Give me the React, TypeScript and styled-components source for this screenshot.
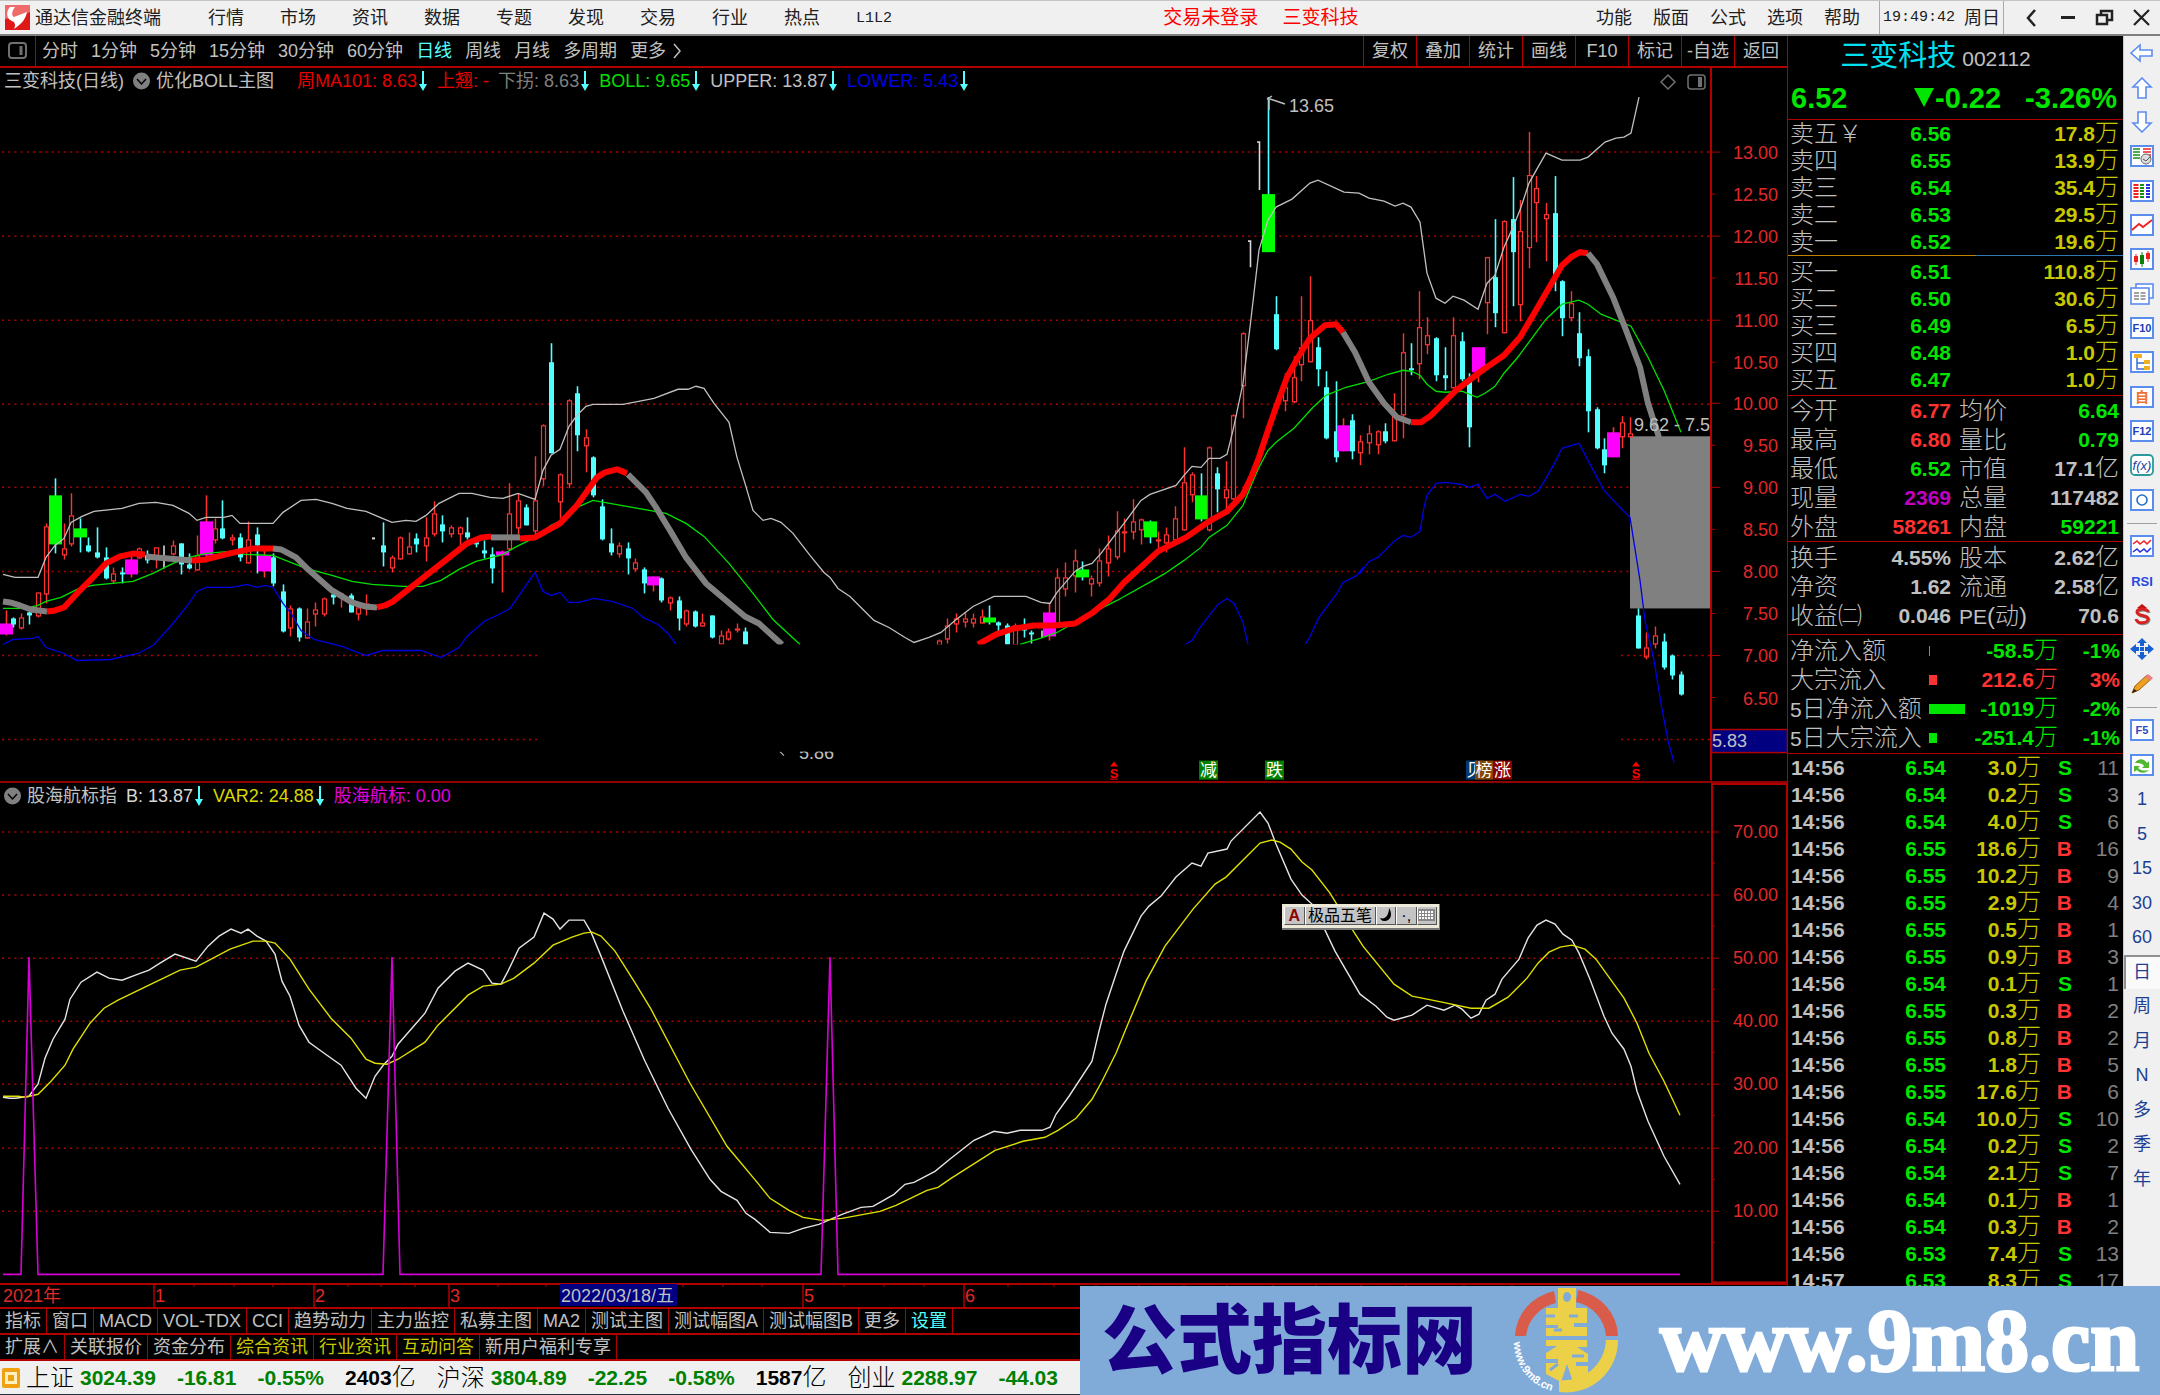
import React from "react";
import styled, { createGlobalStyle } from "styled-components";

const RED = "#b00000";
const SILVER = "#c0c0c0";
const CYAN = "#54ffff";
const GREEN = "#00e600";
const UP = "#ff3232";
const YELLOW = "#c8c800";
const SANS = '"Liberation Sans", "Noto Sans CJK SC", sans-serif';

const Global = createGlobalStyle`
  * { box-sizing: border-box; }
  html, body { margin: 0; background: #000; }
  body { font-family: ${SANS}; font-size: 18px; line-height: 24px; color: ${SILVER}; overflow: hidden; }
  button { font: inherit; color: inherit; background: none; border: 0; padding: 0; margin: 0; white-space: nowrap; cursor: pointer; }
  svg { display: block; }
`;

/* ---------- shell ---------- */
const Shell = styled.div`
  position: relative;
  display: grid;
  grid-template-rows: 36px minmax(0, 1fr) 36px;
  height: 100vh;
  white-space: nowrap;
`;
const Body = styled.div`
  display: grid;
  grid-template-columns: minmax(0, 1fr) 336px 37px;
  min-height: 0;
`;

/* ---------- title bar ---------- */
const TitleBar = styled.header`
  display: flex;
  align-items: center;
  background: #f0f0f0;
  color: #202020;
  border-top: 1px solid #c4c4c4;
  border-bottom: 2px solid #808080;
`;
const TitleLeft = styled.div`
  flex: 1162 1 0;
  display: flex;
  align-items: center;
  gap: 5px;
  padding-left: 5px;
`;
const Menu = styled.nav<{ $gap: number; $left?: number }>`
  display: flex;
  gap: ${(p) => p.$gap}px;
  margin-left: ${(p) => p.$left ?? 0}px;
`;
const Mono = styled.span`
  font-family: "Liberation Mono", "Noto Sans CJK SC", monospace;
  font-size: 15px;
`;
const Notice = styled.div`
  flex: 434 1 0;
  display: flex;
  gap: 24px;
  color: #ff0000;
  font-size: 19px;
`;
const TitleRight = styled.div`
  flex: none;
  width: 564px;
  display: flex;
  align-items: center;
`;
const Clock = styled.div`
  display: flex;
  align-items: center;
  justify-content: center;
  gap: 9px;
  width: 125px;
  height: 33px;
  margin: 0 9px 0 19px;
  border-left: 1px solid #a8a8a8;
  border-right: 1px solid #a8a8a8;
`;
const WinButton = styled.button`
  flex: 1;
  display: grid;
  place-items: center;
`;

/* ---------- chart column ---------- */
const ChartColumn = styled.main`
  display: flex;
  flex-direction: column;
  min-width: 0;
  min-height: 0;
`;
const Toolbar = styled.div`
  flex: none;
  display: flex;
  height: 32px;
  border-bottom: 2px solid ${RED};
`;
const ToggleButton = styled.button`
  width: 36px;
  display: grid;
  place-items: center;
  border-right: 1px solid ${RED};
`;
const Periods = styled.nav`
  flex: 1;
  display: flex;
  align-items: center;
  gap: 13px;
  padding-left: 6px;
`;
const TextButton = styled.button<{ $color?: string }>`
  display: flex;
  align-items: center;
  gap: 6px;
  color: ${(p) => p.$color ?? "inherit"};
`;
const ToolButton = styled.button`
  width: 53px;
  border-left: 1px solid ${RED};
`;
const Panel = styled.section<{ $grow: number }>`
  position: relative;
  flex: ${(p) => p.$grow} 1 0;
  min-height: 0;
  display: grid;
  grid-template: minmax(0, 1fr) / minmax(0, 1fr);
  & > * { grid-area: 1 / 1; }
`;
const PanelRule = styled.div`
  flex: none;
  height: 2px;
  background: #900000;
`;
const Canvas = styled.svg`
  width: 100%;
  height: 100%;
`;
const Legend = styled.div`
  align-self: start;
  display: flex;
  align-items: center;
  gap: 9px;
  height: 26px;
  padding-left: 4px;
`;
const LegendItem = styled.span<{ $color?: string }>`
  display: flex;
  align-items: center;
  gap: 1px;
  color: ${(p) => p.$color ?? SILVER};
`;
const LegendName = styled(LegendItem)<{ $after?: number }>`
  gap: 6px;
  margin-right: ${(p) => p.$after ?? 0}px;
`;
const DateAxis = styled.div`
  flex: none;
  height: 24px;
`;
const Tabs = styled.nav`
  flex: none;
  display: flex;
  height: 26px;
  border-top: 2px solid ${RED};
`;
const Tab = styled.button<{ $color?: string }>`
  padding: 0 5px;
  border-right: 1px solid ${RED};
  color: ${(p) => p.$color ?? SILVER};
`;

/* ---------- input method bar ---------- */
const ImeBar = styled.div`
  position: absolute;
  left: 1282px;
  top: 121px;
  display: flex;
  width: 158px;
  height: 26px;
  padding: 3px 2px;
  background: #ece9d8;
  border-right: 1px solid #777;
  border-bottom: 2px solid #777;
`;
const ImeCell = styled.button<{ $wide?: boolean; $color?: string }>`
  flex: ${(p) => (p.$wide ? "none" : "1")};
  width: ${(p) => (p.$wide ? "71px" : "auto")};
  display: grid;
  place-items: center;
  background: #c4c4c4;
  border-right: 1px solid #555;
  border-bottom: 1px solid #555;
  border-left: 1px solid #fff;
  color: ${(p) => p.$color ?? "#000"};
  font-size: 16px;
  line-height: 18px;
`;

/* ---------- quote column ---------- */
const Quote = styled.aside`
  overflow: hidden;
  border-left: 1px solid ${RED};
`;
const NameRow = styled.div`
  display: flex;
  align-items: baseline;
  justify-content: center;
  gap: 6px;
  height: 40px;
  line-height: 40px;
  font-size: 21px;
  padding-right: 40px;
`;
const StockName = styled.span`
  color: #00e0f0;
  font-size: 29px;
`;
const PriceRow = styled.div`
  display: flex;
  align-items: center;
  height: 43px;
  padding: 0 6px 0 3px;
  color: ${GREEN};
  font-size: 29px;
  font-weight: 700;
`;
const Change = styled.span`
  margin: 0 24px 0 auto;
  display: flex;
  align-items: center;
  gap: 1px;
`;
const Sheet = styled.table<{ $row: number; $top?: number; $bottom?: number }>`
  width: 100%;
  table-layout: fixed;
  border-collapse: separate;
  border-spacing: 0;
  border-top: 1px solid ${RED};
  padding: ${(p) => p.$top ?? 0}px 0 ${(p) => p.$bottom ?? 0}px;
  line-height: ${(p) => p.$row}px;
`;
const Split = styled.div`
  height: 1px;
  background: linear-gradient(to right, #c08000 56%, #2f78b0 56%);
`;
const BuySheet = styled(Sheet)`
  border-top: 0;
`;
const Label = styled.th<{ $indent?: number }>`
  padding: 0 0 0 ${(p) => p.$indent ?? 2}px;
  text-align: left;
  font-size: 24px;
  font-weight: 300;
  b { font-size: 21px; line-height: 1; }
`;
const Cell = styled.td`
  padding: 0;
`;
const Num = styled.td<{ $color?: string; $right?: number; $plain?: boolean }>`
  padding: 0 ${(p) => p.$right ?? 0}px 0 0;
  text-align: right;
  color: ${(p) => p.$color ?? SILVER};
  font-size: 21px;
  font-weight: ${(p) => (p.$plain ? 400 : 700)};
`;
const Time = styled.td`
  padding: 0 0 0 3px;
  font-size: 21px;
  font-weight: 700;
`;
const Unit = styled.span`
  font-size: 24px;
  font-weight: 300;
  line-height: 1;
`;
const Meter = styled.i<{ $color: string }>`
  display: block;
  height: 10px;
  background: ${(p) => p.$color};
`;

/* ---------- tool strip ---------- */
const Strip = styled.nav`
  display: flex;
  flex-direction: column;
  background: #f0f0f0;
  border-left: 1px solid #c8c8c8;
`;
const StripGroup = styled.div<{ $height: number }>`
  display: flex;
  flex-direction: column;
  height: ${(p) => p.$height}px;
`;
const StripButton = styled.button<{ $active?: boolean }>`
  flex: 1;
  display: grid;
  place-items: center;
  color: #1c3f94;
  background: ${(p) => (p.$active ? "#fafafa" : "none")};
  box-shadow: ${(p) => (p.$active ? "inset 2px 2px 0 #909090" : "none")};
`;
const StripRule = styled.hr`
  width: 30px;
  height: 1px;
  margin: 6px auto 5px;
  border: 0;
  background: #a0a0a0;
`;

/* ---------- status bar and banner ---------- */
const StatusBar = styled.footer`
  display: flex;
  align-items: center;
  gap: 21px;
  padding-left: 2px;
  background: #f0f0f0;
  border-top: 2px solid ${RED};
  border-bottom: 1px solid #203040;
  color: #000;
  font-size: 21px;
  font-weight: 700;
`;
const Index = styled.div`
  display: flex;
  align-items: center;
  gap: 21px;
  color: #008000;
`;
const IndexName = styled.span`
  display: flex;
  align-items: center;
  gap: 6px;
`;
const Cap = styled(Unit)`
  color: #000;
`;
const Turnover = styled.span`
  color: #000;
`;
const Banner = styled.div`
  position: absolute;
  right: 0;
  bottom: 0;
  width: 50%;
  height: 109px;
  display: flex;
  align-items: center;
  background: #80abd9;
  overflow: hidden;
`;
const BannerName = styled.div`
  margin-left: 22px;
  width: 408px;
  color: #1a0085;
  font-size: 75px;
  font-weight: 900;
  line-height: 106px;
`;
const BannerLink = styled.a`
  margin-left: 38px;
  color: #fff;
  font-family: "Liberation Serif", serif;
  font-weight: 700;
  font-size: 88px;
  line-height: 100px;
  text-decoration: none;
  -webkit-text-stroke: 3px #fff;
`;

/* ---------- chart data ---------- */
type Frame = [number, number, number, number];
type Candle = [string, number, number, number, number, number];

const F1: Frame = [0, 440, 1.96, 3];
const F2: Frame = [500, 330, 2.529, 3];
const F3: Frame = [1060, 80, 2.3758, 3];
const F4: Frame = [800, 560, 1.7043, 3];
const G1: Frame = [0, 800, 1.7818, 3];
const G2: Frame = [880, 800, 1.8233, 3];

const px = (f: Frame, x: number) => Math.round(f[0] + x / f[2]);
const py = (f: Frame, y: number) => Math.round(f[1] + y / f[3]);
const line = (...parts: [Frame, string][]) =>
  parts
    .map(([f, s]) => s.trim().split(/\s+/).map((p) => {
      const [x, y] = p.split(",").map(Number);
      return px(f, x) + "," + py(f, y);
    }).join(" "))
    .join(" ");

const parse = (s: string): Candle[] =>
  s.trim().split(/\s*;\s*/).filter(Boolean).map((r) => {
    const [k, rest] = r.split(" ");
    const n = rest.split(",").map(Number);
    return [k, n[0], n[1], n[2], n[3], n[4]];
  });

const CANDLES: [Frame, Candle[]][] = [
  [F1, parse(`m 11,510,548,583,585;c 25,530,535,552,560;r 42,520,532,560,567;c 57,510,515,525,552;r 74,455,457,525,530;r 90,250,257,460,490;g 107,115,165,313,340;r 125,250,325,343,358;r 140,160,225,310,318;g 157,235,265,290,335;c 172,290,315,332,337;c 190,260,335,350,354;c 208,320,350,415,417;r 222,380,398,420,428;c 240,380,396,399,430;m 257,345,358,402,412;r 272,320,325,350,355;c 289,330,345,360,370;r 305,320,322,350,385;r 340,300,315,338,345;c 354,308,310,372,402;c 371,340,372,384,386;r 387,285,345,388,390;m 404,165,243,345,350;r 421,235,265,298,310;c 436,180,265,293,297;r 454,283,290,297,315;c 471,280,290,352,362;r 487,242,298,365,370;c 504,260,283,315,398;m 518,320,346,393,412;c 536,340,352,430,437;c 554,432,453,573,577;r 568,495,505,560,588;c 586,500,504,590,602;r 601,505,542,590,595;r 618,485,508,520,557;r 636,470,473,520,528;c 652,455,462,470,492;r 669,455,460,468,502;c 687,460,465,515,517;r 702,488,500,520,540;r 718,462,488,497,525;c 751,247,315,335,377;r 768,345,352,380,395;r 784,288,292,353,357;r 801,275,318,338,342;c 815,280,293,312,335;r 834,230,290,315,363;r 851,183,220,280,288;c 866,225,252,272,307;r 883,255,262,280,290;r 901,258,262,280,315;c 915,230,275,290,297;c 933,295,305,312,320;c 948,300,330,340,355;c 965,320,342,385,430;m 983,330,333,345,457`)],
  [F2, parse(`r 22,460,550,655,660;r 46,490,510,592,612;c 65,523,532,584,586;r 88,378,510,600,612;r 110,283,286,445,467;c 129,40,95,368,370;r 152,428,433,512,565;r 175,207,209,458,475;c 194,168,190,315,363;r 217,298,320,346,427;c 236,378,382,495,500;c 258,508,527,628,630;c 281,595,640,666,675;r 300,635,645,670,680;c 323,635,655,683,733;r 342,685,695,715,722;c 365,712,716,760,788;m 387,738,738,765,782;c 407,742,744,810,815;r 429,797,800,817,840;c 452,797,810,864,900;r 471,837,840,880,887;c 494,840,842,888,892;r 512,850,875,884,887;c 536,854,856,922,924;r 558,900,915,940,942;r 577,895,902,925,930;r 600,878,893,896,905;c 619,890,902,942,942;r 1111,928,930,942,942;r 1131,865,885,925,940;r 1154,850,865,880,905;r 1176,845,863,872,890;r 1195,850,865,877,890;r 1218,838,857,875,880;g 1237,825,860,877,882;c 1260,873,876,886,902;c 1282,880,884,942,942;r 1302,880,884,942,942;c 1325,865,893,895,922;c 1343,900,907,912,940;m 1389,815,847,917,930;r 1408,715,740,880,882;r 1430,695,740,773,797;r 1453,658,690,735,787;g 1472,693,716,741,750;r 1495,735,745,760,797;r 1514,655,690,755,768;r 1537,615,655,697,737;r 1560,542,600,678,688`)],
  [F3, parse(`r 152,1313,1353,1356,1417;r 174,1258,1324,1352,1376;r 192,1313,1316,1347,1393;g 213,1320,1323,1370,1388;r 233,1352,1378,1380,1412;r 252,1340,1363,1385,1415;r 274,1277,1315,1377,1380;r 295,1102,1207,1347,1350;r 313,1175,1183,1243,1267;g 334,1178,1246,1316,1322;r 353,1097,1100,1347,1352;c 373,1160,1178,1226,1297;r 395,1142,1228,1250,1292;r 412,1003,1005,1255,1260;r 434,755,758,914,1015;g 495,50,341,516,516;c 513,647,702,807,809;r 534,880,920,960,993;r 556,827,890,962,970;r 573,647,802,853,903;r 595,588,720,842,845;c 612,770,800,866,917;c 633,872,922,1073,1078;c 655,903,1052,1132,1145;m 673,1015,1034,1114,1114;c 694,1003,1021,1112,1137;r 712,1066,1084,1117,1155;r 733,1034,1060,1085,1122;r 755,1050,1054,1093,1123;c 772,1030,1053,1082,1088;r 794,940,1000,1080,1083;r 815,760,815,1003,1073;c 833,790,865,868,885;r 854,634,742,848,897;r 873,710,766,793,822;c 894,771,773,885,902;c 915,800,886,893,930;r 933,710,766,920,925;c 954,755,782,897,903;c 972,878,900,1042,1102;m 993,800,800,875,907;r 1015,530,532,667,763;c 1033,417,592,700,740;r 1054,420,424,757,760;c 1076,290,418,515,678;r 1093,360,454,673,722;r 1115,155,284,500,565;r 1132,287,325,366,485;r 1154,368,402,414,543;c 1175,287,400,590,632;c 1193,600,602,713,768;r 1215,633,670,712,722;c 1232,697,760,834,857;c 1254,808,828,992,1055;c 1275,980,988,1105,1107;c 1293,1075,1107,1155,1178;m 1314,1042,1056,1131,1131;r 1336,1008,1026,1068,1105;r 1354,1010,1058,1068,1070`)],
  [F4, parse(`c 1429,143,165,263,265;r 1442,215,262,287,297;r 1458,197,226,250,263;c 1473,220,242,322,327;c 1486,282,284,345,358;c 1501,332,342,403,405`)],
];

const UPPER = line(
  [F1, "6,402 30,410 74,410 90,350 107,315 125,295 140,245 160,228 185,212 240,205 272,190 305,185 340,195 370,220 387,240 404,230 440,232 454,226 471,248 536,248 554,215 590,180 620,176 650,190 680,205 718,213 745,230 768,245 795,240 815,244 835,225 860,190 900,158 925,158 960,170 985,173 1015,158"],
  [F2, "88,507 110,420 129,375 152,357 175,287 194,255 217,228 236,223 310,222 390,203 450,178 475,178 495,168 515,175 540,220 578,275 600,380 620,460 640,540 665,570 685,565 710,575 740,610 785,675 820,727 835,740 855,773 885,797 915,835 945,870 985,890 1025,920 1047,935 1085,920 1115,905 1150,870 1195,828 1250,799 1330,799 1368,817 1390,818 1408,785 1453,722 1475,708 1497,700 1520,670 1560,605"],
  [F3, "152,1330 192,1260 215,1243 275,1215 295,1185 313,1157 335,1162 353,1135 380,1135 397,1122 412,1050 434,910 451,740 473,510 495,420 513,380 550,357 595,308 612,301 675,337 710,340 735,354 770,364 795,377 815,370 835,380 855,425 873,580 894,655 915,670 933,648 960,660 993,688 1015,610 1033,585 1054,500 1076,440 1093,390 1115,310 1135,260 1154,220 1193,239 1235,239 1254,230 1295,185 1320,175 1340,170 1356,158 1376,52"],
);
const MIDDLE = [
  line(
    [F1, "6,505 50,505 74,495 90,482 120,470 150,447 180,434 260,423 300,400 340,370 370,350 404,338 450,333 480,343 536,345 600,383 650,405 690,423 730,433 790,438 830,437 865,420 900,387 933,363 965,352 985,342 1010,320"],
    [F2, "88,620 129,585 152,573 194,530 236,511 420,548 470,580 515,618 578,700 640,790 690,868 758,942"],
  ),
  line(
    [F2, "1315,942 1366,925 1408,905 1450,880 1500,845 1560,809"],
    [F3, "220,1500 250,1480 295,1440 334,1402 353,1370 397,1335 434,1275 455,1210 473,1160 495,1110 513,1085 556,1045 600,980 633,945 680,922 733,902 780,882 815,870 835,873 855,885 873,913 894,932 915,937 955,932 990,950 1010,940 1033,917 1054,880 1085,835 1115,785 1154,718 1193,673 1232,661 1254,673 1285,703 1356,738 1397,830 1436,930 1475,1055"],
  ),
];
const LOWER = [
  line([F1, "6,612 25,596 65,595 74,587 90,622 125,640 150,660 215,657 270,640 300,615 340,550 370,490 387,453 404,441 454,441 485,432 504,440 520,436 536,441 554,490 570,520 590,570 615,597 670,618 718,645 750,631 825,631 865,650 900,622 915,588 948,543 975,525 1000,503 1048,397 1065,453 1080,465 1098,455 1116,487 1135,487 1165,473 1200,482 1240,505 1260,530 1290,552 1310,580 1324,612"]),
  line([F4, "656,252 668,240 682,200 712,133 727,113 740,130 755,185 764,252"]),
  line(
    [F4, "860,252 868,235 885,170 915,100 925,65 950,45 960,20"],
    [F3, "712,1480 733,1442 755,1432 795,1380 815,1365 835,1370 855,1353 865,1280 873,1245 894,1210 915,1207 955,1212 972,1222 993,1212 1015,1255 1033,1243 1058,1262 1093,1243 1115,1248 1135,1232 1154,1195 1175,1145 1193,1105 1232,1090 1254,1140 1293,1230 1325,1275 1354,1310 1378,1500"],
    [F4, "1440,180 1455,300 1468,430 1480,540 1490,605"],
  ),
];
const TREND: [string, string][] = [
  ["gray", line([F1, "6,483 20,485 40,495 60,508 92,514"])],
  ["red", line([F1, "92,512 108,510 125,500 150,460 180,415 208,370 235,348 262,340 285,342"])],
  ["gray", line([F1, "287,347 330,355 376,360"])],
  ["red", line([F1, "376,360 404,358 450,338 495,324 535,323"])],
  ["gray", line([F1, "535,325 550,327 580,352 600,380 650,450 690,487 715,497 738,500"])],
  ["red", line([F1, "738,500 755,495 770,483 815,430 860,375 915,308 945,290 962,289"])],
  ["gray", line([F1, "962,291 1020,292"])],
  ["red", line([F1, "1020,293 1048,290 1098,250 1130,195 1170,110 1185,97 1210,88 1228,100"])],
  ["gray", line([F2, "323,432 370,487 395,530 430,600 470,680 520,760 620,858 655,880 712,942"])],
  ["red", line([F2, "1210,942 1255,912 1300,893 1350,886 1400,885 1453,878 1500,845 1540,808"], [F3, "152,1507 175,1480 233,1412 300,1370 353,1323 397,1293 434,1243 455,1185 473,1130 495,1050 513,980 540,890 565,830 595,775 630,735 655,732 673,755"])],
  ["gray", line([F3, "673,755 700,815 735,905 770,970 800,1010 835,1026"])],
  ["red", line([F3, "835,1026 857,1026 880,1007 940,930 1000,873 1054,825 1093,770 1130,690 1193,555 1215,530 1235,517 1254,520"])],
  ["gray", line([F3, "1254,520 1275,553 1315,650 1345,750 1378,860 1397,970 1422,1070"])],
];
const WAVE_B = line(
  [G1, "6,888 18,892 28,892 40,888 52,885 60,865 68,850 80,770 95,715 115,655 125,595 145,542 172,514 195,532 217,538 245,518 265,508 285,485 311,460 350,480 370,435 390,405 411,383 430,397 442,385 458,405 474,420 490,460 503,540 517,585 533,672 550,722 570,748 607,792 635,862 653,892 668,825 685,790 698,765 710,728 757,635 780,562 810,510 834,486 860,507 877,545 893,550 905,510 925,442 952,407 969,336 985,355 998,383 1014,357 1040,357 1053,392 1070,465 1110,630 1150,780 1190,920 1232,1045 1265,1135 1285,1170 1313,1198 1330,1235 1345,1253 1372,1293 1405,1297 1430,1280 1460,1268 1500,1240 1535,1217 1555,1215"],
  [G2, "0,1203 25,1180 46,1150 62,1143 100,1110 130,1070 172,1018 208,990 232,996 255,987 295,987 310,977 320,940 345,885 387,780 400,690 412,610 430,520 445,450 475,345 490,315 512,285 540,228 568,185 585,195 598,155 632,145 640,120 692,33 708,65 722,130 750,235 770,283 787,308 812,388 830,450 875,578 905,615 925,648 938,658 970,643 998,613 1028,628 1048,611 1062,625 1077,650 1092,640 1105,598 1122,580 1135,535 1165,475 1182,410 1198,373 1215,356 1230,368 1245,400 1262,417 1275,455 1295,535 1320,645 1335,695 1357,745 1370,795 1380,870 1400,960 1430,1065 1458,1150"],
);
const WAVE_VAR = line(
  [G1, "6,884 32,884 45,888 68,878 90,840 115,792 130,745 160,665 185,622 210,597 265,553 320,508 350,497 410,443 450,421 474,420 490,427 517,475 550,565 590,650 625,712 653,775 668,785 690,788 710,775 757,722 780,672 834,583 860,556 893,550 915,532 952,487 985,433 1020,408 1040,395 1055,393 1070,405 1095,450 1130,540 1160,625 1230,845 1295,1035 1350,1145 1372,1190 1405,1227 1430,1247 1465,1257 1500,1250"],
  [G2, "0,1230 30,1213 85,1167 105,1157 130,1130 210,1047 260,1020 300,1007 325,988 357,950 387,895 405,840 430,755 450,675 485,540 520,435 570,325 610,250 630,228 692,127 715,118 730,122 750,145 770,183 787,208 820,275 860,385 880,435 938,550 970,585 1025,602 1077,620 1110,620 1145,587 1180,530 1200,485 1220,452 1240,437 1262,433 1285,445 1305,475 1357,590 1380,665 1402,755 1430,840 1458,943"],
);
const SIGNAL = line(
  [G1, "6,1419 38,1419 52,468 68,1419 683,1419 698,468 713,1419 1463,1419 1479,468 1493,1419"],
  [G2, "1458,1419"],
);

const CandleMark = ({ f, c }: { f: Frame; c: Candle }) => {
  const [k, x0, hi, top, bot, lo] = c;
  const x = px(f, x0), a = py(f, hi), b = py(f, top), d = py(f, bot), e = py(f, lo);
  if (k === "r")
    return <g fill="none" stroke={UP}><path d={`M${x + 0.5} ${a}V${b}M${x + 0.5} ${d}V${e}`} strokeWidth="1.4" /><rect x={x - 1.5} y={b + 0.5} width="4" height={Math.max(1, d - b)} strokeWidth="1.2" /></g>;
  const wide = k === "g" || k === "m";
  const fill = k === "g" ? "#00ff00" : k === "m" ? "#ff00ff" : CYAN;
  const w = wide ? 13 : 5;
  return (
    <g>
      <path d={`M${x + 0.5} ${a}V${e}`} stroke={k === "m" ? UP : CYAN} strokeWidth="1.6" />
      <rect x={x - (w - 1) / 2} y={b} width={w} height={Math.max(2, d - b)} fill={fill} />
    </g>
  );
};

const GRID = [152, 236, 320, 404, 487, 571, 655, 739];
const GRID2 = [831, 894, 957, 1020, 1083, 1147, 1210];
const AXIS = ["13.00", "12.50", "12.00", "11.50", "11.00", "10.50", "10.00", "9.50", "9.00", "8.50", "8.00", "7.50", "7.00", "6.50"];

const Badge = ({ x, w, fill, t }: { x: number; w: number; fill: string; t: string }) => (
  <g>
    <rect x={x} y="760" width={w} height="19" fill={fill} />
    <text x={x + w / 2} y="775" textAnchor="middle" fill="#fff" fontSize="17">{t}</text>
  </g>
);
const SellMark = ({ x }: { x: number }) => (
  <g fill="#ff0000">
    <path d={`M${x} 761l4 5h-8z`} />
    <text x={x} y="777" textAnchor="middle" fontSize="13" fontWeight="700">S</text>
    <path d={`M${x - 4} 778h8v1h-8z`} />
  </g>
);

const PriceChart = () => (
  <Canvas viewBox="0 68 1787 712" preserveAspectRatio="none" fontSize="18">
    {GRID.map((y, i) => (
      <g key={y} stroke={RED} strokeWidth="1.5" strokeDasharray="2 4.2">
        <path d={i < 6 ? `M2 ${y}H1710` : `M2 ${y}H538M1621 ${y}H1710`} />
      </g>
    ))}
    <rect x="1630" y="436" width="80" height="172" fill="#808080" />
    {CANDLES.map(([f, cs]) => cs.map((c) => <CandleMark key={f[0] + "-" + c[1]} f={f} c={c} />))}
    <g fill="none" stroke="#d8d8d8" strokeWidth="1.6">
      <path d="M164 545V568M1248 241h2.500V267M1257 142h2.500V190M1042 630V637" />
      <path d="M372 538h3" strokeWidth="2" />
    </g>
    <g fill="none" strokeWidth="1.3">
      <polyline points={UPPER} stroke="#c0c0c0" />
      {MIDDLE.map((p, i) => <polyline key={i} points={p} stroke="#00e000" />)}
      {LOWER.map((p, i) => <polyline key={i} points={p} stroke="#0000e0" />)}
    </g>
    {TREND.map(([c, p], i) => (
      <polyline key={i} points={p} fill="none" strokeWidth="6" strokeLinejoin="round" stroke={c === "red" ? "#ff0000" : "#808080"} />
    ))}
    <path d="M1269 110V98M1267 99l5 -3M1270 99l15 5" stroke={SILVER} fill="none" strokeWidth="1.4" />
    <g fill={SILVER}>
      <text x="1289" y="112">13.65</text>
      <text x="1634" y="431">9.62 - 7.5</text>
      <text x="799" y="758">5.86</text>
      <path d="M780 751l4 4" stroke={SILVER} />
    </g>
    <rect x="538" y="644" width="1082" height="107" fill="#000" />
    <SellMark x={1114} />
    <Badge x={1199} w={19} fill="#008000" t="减" />
    <Badge x={1265} w={19} fill="#008000" t="跌" />
    <Badge x={1466} w={18} fill="#003c70" t="贝" />
    <Badge x={1475} w={18} fill="#8a4500" t="榜" />
    <Badge x={1493} w={19} fill="#8a0000" t="涨" />
    <SellMark x={1636} />
    <path d="M1711 68V780" stroke={RED} strokeWidth="2" />
    <g fill="#e02828" textAnchor="end">
      {AXIS.map((t, i) => (
        <g key={t}>
          <path d={`M1711 ${Math.round(152 + i * 41.9)}h${i % 2 ? 4 : 9}`} stroke={RED} />
          <text x="1778" y={Math.round(152 + i * 41.9) + 7}>{t}</text>
        </g>
      ))}
    </g>
    <rect x="1711.500" y="729" width="76" height="23" fill="#000080" stroke={RED} strokeWidth="1.5" />
    <text x="1712" y="746" fill={SILVER}>5.83</text>
    <g fill="none" stroke="#707070" strokeWidth="1.5">
      <path d="M1668 75l7 7l-7 7l-7 -7z" />
      <rect x="1688" y="75" width="17" height="14" rx="3" />
      <path d="M1700 77v10" strokeWidth="4" />
    </g>
  </Canvas>
);

const WaveChart = () => (
  <Canvas viewBox="0 782 1787 500" preserveAspectRatio="none" fontSize="18">
    {GRID2.map((y) => <path key={y} d={`M2 ${y}H1710`} stroke={RED} strokeWidth="1.5" strokeDasharray="2 4.2" />)}
    <g fill="none" strokeWidth="1.4">
      <polyline points={WAVE_B} stroke="#e4e4e4" />
      <polyline points={WAVE_VAR} stroke="#e0e000" />
      <polyline points={SIGNAL} stroke="#d800d8" strokeWidth="1.6" />
    </g>
    <rect x="1712" y="783" width="75" height="498" fill="none" stroke={RED} strokeWidth="2" />
    <g fill="#e02828" textAnchor="end" stroke="none">
      {GRID2.map((y, i) => (
        <g key={y}>
          <path d={`M1711 ${y}h8M1711 ${y + 31}h4`} stroke={RED} />
          <text x="1778" y={y + 6}>{70 - i * 10}.00</text>
        </g>
      ))}
    </g>
  </Canvas>
);

const MINOR = [194, 234, 273, 348, 381, 415, 498, 546, 683, 723, 762, 844, 884, 924, 1008, 1054, 1096, 1139, 1184, 1227, 1273, 1316, 1361, 1406, 1464, 1512];
const Dates = () => (
  <Canvas viewBox="0 1282 1787 24" preserveAspectRatio="none" fontSize="18">
    <path d="M0 1283H1787" stroke={RED} strokeWidth="2" />
    <path d={MINOR.map((x) => `M${x} 1283v3`).join("")} stroke={RED} />
    <path d="M154 1283v23M314 1283v23M449 1283v23M803 1283v23M964 1283v23" stroke={RED} strokeWidth="1.5" />
    <rect x="560" y="1283" width="117" height="22" fill="#000080" />
    <g fill="#e02828">
      <text x="3" y="1301">2021年</text>
      <text x="155" y="1301">1</text>
      <text x="315" y="1301">2</text>
      <text x="450" y="1301">3</text>
      <text x="804" y="1301">5</text>
      <text x="965" y="1301">6</text>
    </g>
    <text x="561" y="1301" fill={SILVER}>2022/03/18/五</text>
  </Canvas>
);

/* ---------- small drawings ---------- */
const Logo = () => (
  <svg width="25" height="25" viewBox="0 0 25 25">
    <rect width="25" height="25" fill="#e01818" />
    <path d="M0 0h25v7L14 12L0 14z" fill="#f06a6a" />
    <path d="M5 2h5c-3 4-4 8-1 10l13-5c-1 6-5 12-13 17c2-4 1-7-2-8C1 14 1 6 5 2z" fill="#fff" />
  </svg>
);
const PanelIcon = () => (
  <svg width="20" height="18" viewBox="0 0 20 18" fill="none" stroke="#707070" strokeWidth="2">
    <rect x="1" y="1" width="17" height="15" rx="3" /><path d="M13 4v9" strokeWidth="3" />
  </svg>
);
const DownArrow = () => (
  <svg width="10" height="20" viewBox="0 0 10 20" fill={CYAN}><path d="M4 0h2v13h3l-4 7l-4-7h3z" /></svg>
);
const MoreMark = () => (
  <svg width="10" height="18" viewBox="0 0 10 18"><path d="M2 2l6 7l-6 7" fill="none" stroke={SILVER} strokeWidth="1.5" /></svg>
);
const Chevron = () => (
  <svg width="17" height="18" viewBox="0 0 17 18"><circle cx="8.500" cy="9" r="8.500" fill="#808080" /><path d="M4 7l4.500 5L13 7" fill="none" stroke="#000" strokeWidth="1.5" /></svg>
);

const box = <rect x="1" y="1" width="22" height="20" fill="#fff" stroke="#5b8def" strokeWidth="2" />;
const mono = (t: string, color = "#2848c8") => <text x="12" y="15" textAnchor="middle" fontSize="11" fontWeight="700" fill={color}>{t}</text>;
const ICONS: [string, React.ReactNode][] = [
  ["后退", <path d="M1 11l9-8v5h12v6H10v5z" fill="#fff" stroke="#5b8def" strokeWidth="1.6" />],
  ["上移", <path d="M12 1l9 9h-5v11H8V10H3z" fill="#fff" stroke="#5b8def" strokeWidth="1.6" />],
  ["下移", <path d="M12 21l9-9h-5V1H8v11H3z" fill="#fff" stroke="#5b8def" strokeWidth="1.6" />],
  ["自选报价", <>{box}<path d="M3 4h7M3 7h7M3 10h7M3 13h7" stroke="#159015" strokeWidth="1.5" /><path d="M13 4h8M13 7h8M15 10h6" stroke="#f02020" strokeWidth="1.5" /><circle cx="16" cy="14" r="5" fill="#ddd" stroke="#666" /><path d="M13 14l3 2l5-5" fill="none" stroke="#555" /></>],
  ["行情表", <>{box}<path d="M6 4v14" stroke="#f02020" strokeWidth="5" strokeDasharray="2 1" /><path d="M12 4v14" stroke="#159015" strokeWidth="4" strokeDasharray="2 1" /><path d="M18 4v14" stroke="#2030e0" strokeWidth="4" strokeDasharray="2 1" /></>],
  ["分时图", <>{box}<path d="M2 16l7-6l4 3l9-7" fill="none" stroke="#f02020" strokeWidth="1.8" /></>],
  ["K线图", <>{box}<path d="M6 6v11M18 3v11" stroke="#f02020" /><path d="M12 4v15" stroke="#0a800a" /><path d="M4 8h4v6H4zM16 5h4v6h-4z" fill="#f02020" /><path d="M10 7h4v9h-4z" fill="#0a800a" /></>],
  ["资讯", <><rect x="6" y="1" width="17" height="14" fill="#fff" stroke="#5b8def" strokeWidth="1.6" /><rect x="1" y="5" width="18" height="16" fill="#fff" stroke="#5b8def" strokeWidth="1.6" /><path d="M4 10h12M4 13h12M4 16h12" stroke="#444" strokeDasharray="5 1.500" /></>],
  ["F10", <>{box}{mono("F10", "#2040b8")}</>],
  ["板块树", <>{box}<path d="M7 7v11h7M7 12h7" fill="none" stroke="#3a70d0" strokeWidth="1.5" /><path d="M4 3h8v4H4zM14 9h6v4h-6zM14 15h6v4h-6z" fill="#f0b020" /></>],
  ["自选股", <>{box}<text x="12" y="16" textAnchor="middle" fontSize="14" fontWeight="700" fill="#f07030">自</text></>],
  ["F12", <>{box}{mono("F12", "#2040b8")}</>],
  ["公式", <><rect x="1" y="1" width="22" height="20" rx="4" fill="#fff" stroke="#2a9a9a" strokeWidth="1.8" /><text x="12" y="16" textAnchor="middle" fontSize="13" fontStyle="italic" fill="#1c40a0">f(x)</text></>],
  ["圈选", <>{box}<circle cx="12" cy="11" r="5" fill="none" stroke="#2070c8" strokeWidth="1.6" /></>],
];
const ICONS2: [string, React.ReactNode][] = [
  ["多图", <>{box}<path d="M3 9l4-3l3 3l4-3l3 3l4-4" fill="none" stroke="#f02020" strokeWidth="1.5" /><path d="M3 17l4-3l3 3l4-3l3 3l4-4" fill="none" stroke="#2030e0" strokeWidth="1.5" /></>],
  ["RSI", <text x="12" y="16" textAnchor="middle" fontSize="13" fontWeight="700" fill="#2848e0">RSI</text>],
  ["交易", <><path d="M12 0l5 4H7z" fill="#c01010" /><path d="M18 8c-1-4-11-4-11 0c0 5 11 2 11 7c0 5-11 5-12 0" transform="translate(1 1)" fill="none" stroke="#888" strokeWidth="3" /><path d="M18 8c-1-4-11-4-11 0c0 5 11 2 11 7c0 5-11 5-12 0" fill="none" stroke="#d82020" strokeWidth="3" /></>],
  ["移动", <path d="M12 0l5 5h-3v3h-4V5H7zM12 22l5-5h-3v-3h-4v3H7zM0 11l6-5v3h3v4H6v3zM24 11l-6-5v3h-3v4h3v3zM10 9h4v4h-4z" fill="#1860d0" />],
  ["画笔", <><path d="M2 20l3-7L17 2l4 4L9 17z" fill="#f0a020" stroke="#9a6010" /><path d="M15 4l3-3l5 4l-3 3z" fill="#e88080" /><path d="M2 20l2-4l3 2z" fill="#222" /></>],
];
const ICONS3: [string, React.ReactNode][] = [
  ["F5", <>{box}{mono("F5")}</>],
  ["刷新", <>{box}<path d="M5 9c3-5 9-5 12 0l2-2v7h-7l2-2c-2-3-5-3-9-3zM4 12h6l-2 2c3 3 7 3 11 2c-4 4-10 3-12 0l-3 2z" fill="#50b830" /></>],
];
const LETTERS = ["1", "5", "15", "30", "60", "日", "周", "月", "N", "多", "季", "年"];

const Icon = ({ children }: { children: React.ReactNode }) => <svg width="24" height="22" viewBox="0 0 24 22">{children}</svg>;
const IconButtons = ({ items }: { items: [string, React.ReactNode][] }) => (
  <>{items.map(([n, d]) => <StripButton key={n} aria-label={n}><Icon>{d}</Icon></StripButton>)}</>
);

/* ---------- quote data ---------- */
const SELL = [["卖五￥", "6.56", "17.8"], ["卖四", "6.55", "13.9"], ["卖三", "6.54", "35.4"], ["卖二", "6.53", "29.5"], ["卖一", "6.52", "19.6"]];
const BUY = [["买一", "6.51", "110.8"], ["买二", "6.50", "30.6"], ["买三", "6.49", "6.5"], ["买四", "6.48", "1.0"], ["买五", "6.47", "1.0"]];
const STATS: [string, string, string, string, string, string, string][] = [
  ["今开", "6.77", UP, "均价", "6.64", "", GREEN],
  ["最高", "6.80", UP, "量比", "0.79", "", GREEN],
  ["最低", "6.52", GREEN, "市值", "17.1", "亿", SILVER],
  ["现量", "2369", "#c000c0", "总量", "117482", "", SILVER],
  ["外盘", "58261", UP, "内盘", "59221", "", GREEN],
];
const STATS2: typeof STATS = [
  ["换手", "4.55%", SILVER, "股本", "2.62", "亿", SILVER],
  ["净资", "1.62", SILVER, "流通", "2.58", "亿", SILVER],
  ["收益㈡", "0.046", SILVER, "PE(动)", "70.6", "", SILVER],
];
const FLOWS: [string, string, number, string, string, string][] = [
  ["", "净流入额", 1, "-58.5", "-1%", GREEN],
  ["", "大宗流入", 8, "212.6", "3%", UP],
  ["5", "日净流入额", 36, "-1019", "-2%", GREEN],
  ["5", "日大宗流入", 8, "-251.4", "-1%", GREEN],
];
const TICKS = "6.54 3.0 S 11|6.54 0.2 S 3|6.54 4.0 S 6|6.55 18.6 B 16|6.55 10.2 B 9|6.55 2.9 B 4|6.55 0.5 B 1|6.55 0.9 B 3|6.54 0.1 S 1|6.55 0.3 B 2|6.55 0.8 B 2|6.55 1.8 B 5|6.55 17.6 B 6|6.54 10.0 S 10|6.54 0.2 S 2|6.54 2.1 S 7|6.54 0.1 B 1|6.54 0.3 B 2|6.53 7.4 S 13|6.53 8.3 S 17"
  .split("|").map((r) => r.split(" "));

const Col = styled.col<{ $w: number }>`
  width: ${(p) => p.$w}px;
`;
const Cols = ({ w }: { w: number[] }) => <colgroup>{w.map((n, i) => <Col key={i} $w={n} />)}</colgroup>;

const Levels = ({ rows }: { rows: string[][] }) => (
  <>
    <Cols w={[90, 73, 172]} />
    <tbody>
      {rows.map(([n, p, v]) => (
        <tr key={n}>
          <Label scope="row">{n}</Label>
          <Num $color={GREEN}>{p}</Num>
          <Num $color={YELLOW} $right={4}>{v}<Unit>万</Unit></Num>
        </tr>
      ))}
    </tbody>
  </>
);
const StatRows = ({ rows }: { rows: typeof STATS }) => (
  <>
    <Cols w={[80, 83, 76, 96]} />
    <tbody>
      {rows.map(([a, b, c, d, e, u, f]) => (
        <tr key={a}>
          <Label scope="row">{a}</Label>
          <Num $color={c}>{b}</Num>
          <Label scope="row" $indent={8}>{d.startsWith("PE") ? <><b>PE</b>(动)</> : d}</Label>
          <Num $color={f} $right={4}>{e}{u && <Unit>{u}</Unit>}</Num>
        </tr>
      ))}
    </tbody>
  </>
);

const INDICES = [
  ["上证", "3024.39", "-16.81", "-0.55%", "2403"],
  ["沪深", "3804.89", "-22.25", "-0.58%", "1587"],
  ["创业", "2288.97", "-44.03"],
];

export default function App() {
  return (
    <Shell>
      <Global />
      <TitleBar>
        <TitleLeft>
          <Logo />
          <span>通达信金融终端</span>
          <Menu $gap={36} $left={42}>
            {["行情", "市场", "资讯", "数据", "专题", "发现", "交易", "行业", "热点"].map((t) => <button key={t}>{t}</button>)}
            <button><Mono>L1L2</Mono></button>
          </Menu>
        </TitleLeft>
        <Notice><span>交易未登录</span><span>三变科技</span></Notice>
        <TitleRight>
          <Menu $gap={21}>{["功能", "版面", "公式", "选项", "帮助"].map((t) => <button key={t}>{t}</button>)}</Menu>
          <Clock><Mono>19:49:42</Mono><span>周日</span></Clock>
          <WinButton aria-label="收起"><svg width="12" height="18" viewBox="0 0 12 18"><path d="M10 1L3 9l7 8" fill="none" stroke="#222" strokeWidth="2.5" /></svg></WinButton>
          <WinButton aria-label="最小化"><svg width="14" height="4"><rect width="14" height="3" fill="#222" /></svg></WinButton>
          <WinButton aria-label="还原"><svg width="19" height="17" viewBox="0 0 19 17" fill="none" stroke="#222" strokeWidth="2.5"><path d="M6 5V2h11v9h-4" /><rect x="2" y="6" width="10" height="9" /></svg></WinButton>
          <WinButton aria-label="关闭"><svg width="17" height="17" viewBox="0 0 17 17"><path d="M1 1l15 15M16 1L1 16" stroke="#222" strokeWidth="2.2" /></svg></WinButton>
        </TitleRight>
      </TitleBar>

      <Body>
        <ChartColumn>
          <Toolbar>
            <ToggleButton aria-label="侧栏"><PanelIcon /></ToggleButton>
            <Periods>
              {["分时", "1分钟", "5分钟", "15分钟", "30分钟", "60分钟", "日线", "周线", "月线", "多周期", "更多"].map((t) => (
                <TextButton key={t} $color={t === "日线" ? CYAN : undefined}>{t}{t === "更多" && <MoreMark />}</TextButton>
              ))}
            </Periods>
            {["复权", "叠加", "统计", "画线", "F10", "标记", "-自选", "返回"].map((t) => <ToolButton key={t}>{t}</ToolButton>)}
          </Toolbar>

          <Panel $grow={712}>
            <PriceChart />
            <Legend>
              <LegendName>三变科技(日线)</LegendName>
              <LegendName $after={14}><Chevron />优化BOLL主图</LegendName>
              <LegendItem $color="#e80000">周MA101: 8.63<DownArrow /></LegendItem>
              <LegendItem $color="#e80000">上翘: -</LegendItem>
              <LegendItem $color="#808080">下拐: 8.63<DownArrow /></LegendItem>
              <LegendItem $color="#00e000">BOLL: 9.65<DownArrow /></LegendItem>
              <LegendItem>UPPER: 13.87<DownArrow /></LegendItem>
              <LegendItem $color="#0000e0">LOWER: 5.43<DownArrow /></LegendItem>
            </Legend>
          </Panel>
          <PanelRule />
          <Panel $grow={500}>
            <WaveChart />
            <Legend>
              <LegendName><Chevron />股海航标指</LegendName>
              <LegendItem $color="#d8d8d8">B: 13.87<DownArrow /></LegendItem>
              <LegendItem $color="#d8d800">VAR2: 24.88<DownArrow /></LegendItem>
              <LegendItem $color="#e000e0">股海航标: 0.00</LegendItem>
            </Legend>
            <ImeBar>
              <ImeCell $color="#900000"><b>A</b></ImeCell>
              <ImeCell $wide>极品五笔</ImeCell>
              <ImeCell aria-label="半角"><svg width="12" height="14" viewBox="0 0 12 14"><path d="M9 0c4 6 2 13-5 13c-2 0-3-1-4-3c6 2 9-4 9-10z" /></svg></ImeCell>
              <ImeCell>·,</ImeCell>
              <ImeCell aria-label="软键盘"><svg width="17" height="12" viewBox="0 0 17 12"><rect width="17" height="12" fill="#888" /><path d="M1 3h15M1 6h15M1 9h15" stroke="#fff" strokeWidth="2" strokeDasharray="2 1" /></svg></ImeCell>
            </ImeBar>
          </Panel>
          <DateAxis><Dates /></DateAxis>
          <Tabs>
            {["指标", "窗口", "MACD", "VOL-TDX", "CCI", "趋势动力", "主力监控", "私募主图", "MA2", "测试主图", "测试幅图A", "测试幅图B", "更多", "设置"].map((t) => (
              <Tab key={t} $color={t === "设置" ? CYAN : undefined}>{t}</Tab>
            ))}
          </Tabs>
          <Tabs>
            {["扩展∧", "关联报价", "资金分布", "综合资讯", "行业资讯", "互动问答", "新用户福利专享"].map((t, i) => (
              <Tab key={t} $color={i > 2 && i < 6 ? YELLOW : undefined}>{t}</Tab>
            ))}
          </Tabs>
        </ChartColumn>

        <Quote>
          <NameRow><StockName>三变科技</StockName>002112</NameRow>
          <PriceRow>
            <span>6.52</span>
            <Change><svg width="20" height="19" viewBox="0 0 20 19"><path d="M0 0h20L10 19z" fill={GREEN} /></svg>-0.22</Change>
            <span>-3.26%</span>
          </PriceRow>
          <Sheet $row={27}><Levels rows={SELL} /></Sheet>
          <Split />
          <BuySheet $row={27} $top={2} $bottom={2}><Levels rows={BUY} /></BuySheet>
          <Sheet $row={29}><StatRows rows={STATS} /></Sheet>
          <Sheet $row={29} $top={1} $bottom={4}><StatRows rows={STATS2} /></Sheet>
          <Sheet $row={29} $top={1} $bottom={1}>
            <Cols w={[141, 36, 93, 65]} />
            <tbody>
              {FLOWS.map(([five, n, w, v, p, c]) => (
                <tr key={five + n}>
                  <Label scope="row">{five && <b>{five}</b>}{n}</Label>
                  <Cell><Meter $color={c} style={{ width: w }} /></Cell>
                  <Num $color={c}>{v}<Unit>万</Unit></Num>
                  <Num $color={c} $right={3}>{p}</Num>
                </tr>
              ))}
            </tbody>
          </Sheet>
          <Sheet $row={27}>
            <Cols w={[80, 78, 95, 31, 51]} />
            <tbody>
              {TICKS.map(([p, v, s, n], i) => (
                <tr key={i}>
                  <Time>{i === 19 ? "14:57" : "14:56"}</Time>
                  <Num $color={GREEN}>{p}</Num>
                  <Num $color={YELLOW}>{v}<Unit>万</Unit></Num>
                  <Num $color={s === "S" ? GREEN : UP}>{s}</Num>
                  <Num $color="#808080" $right={4} $plain>{n}</Num>
                </tr>
              ))}
            </tbody>
          </Sheet>
        </Quote>

        <Strip>
          <StripGroup $height={481}><IconButtons items={ICONS} /></StripGroup>
          <StripRule />
          <StripGroup $height={172}><IconButtons items={ICONS2} /></StripGroup>
          <StripRule />
          <StripGroup $height={483}>
            <IconButtons items={ICONS3} />
            {LETTERS.map((t) => <StripButton key={t} $active={t === "日"}>{t}</StripButton>)}
          </StripGroup>
        </Strip>
      </Body>

      <StatusBar>
        {INDICES.map(([n, a, b, c, d], i) => (
          <Index key={n}>
            <IndexName>
              {i === 0 && <svg width="18" height="20" viewBox="0 0 18 20"><rect width="18" height="20" rx="2" fill="#f0a010" /><rect x="3" y="4" width="12" height="12" fill="#fff0c0" /><rect x="6" y="7" width="6" height="6" fill="#f0a010" /></svg>}
              <Cap>{n}</Cap>{a}
            </IndexName>
            <span>{b}</span>
            {c && <span>{c}</span>}
            {d && <Turnover>{d}<Unit>亿</Unit></Turnover>}
          </Index>
        ))}
      </StatusBar>

      <Banner>
        <BannerName>公式指标网</BannerName>
        <svg width="112" height="109" viewBox="0 0 112 109">
          <path d="M5 50A51 48 0 0 1 44 5L46 17A38 38 0 0 0 16 50z" fill="#d95c4a" />
          <path d="M68 4A51 48 0 0 1 108 50H96A38 38 0 0 0 66 16z" fill="#d95c4a" />
          <path d="M108 54A52 52 0 0 1 49 106V94A42 42 0 0 0 96 54z" fill="#ecd048" />
          <path fillRule="evenodd" d="M48 2h18v20h11v15H64v4h13v9H36v-8h12v-3H36V22h12zM57 6a4 5 0 1 0 .1 0z" fill="#ecd048" />
          <path d="M36 54h41v7H67l11 7v8H66v4h12v10l-15 6l-6-18l-6 18l-15-8V77h12v-4H36v-6l11-7H36z" fill="#ecd048" />
          <path d="M36 30h9M68 30h-9M52 44h-8M62 70h12M40 84l8-6" stroke="#80abd9" strokeWidth="3" />
          <path id="ring" d="M4 56A50 50 0 0 0 48 106" fill="none" />
          <text fontSize="11" fontWeight="700" fill="#fff"><textPath href="#ring">www.9m8.cn</textPath></text>
        </svg>
        <BannerLink href="#">www.9m8.cn</BannerLink>
      </Banner>
    </Shell>
  );
}
